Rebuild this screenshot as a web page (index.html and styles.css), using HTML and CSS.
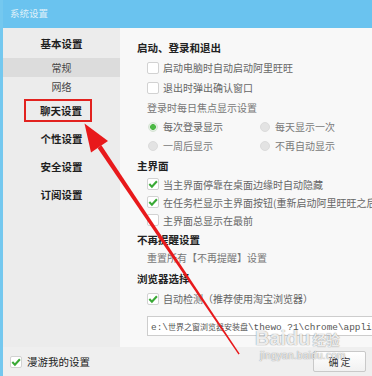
FILE: index.html
```html
<!DOCTYPE html>
<html lang="zh-CN">
<head>
	<meta charset="UTF-8">
	<title>系统设置</title>
	<link rel="stylesheet" href="styles.css">
</head>
<body>
<div class="window">
	<div class="titlebar">系统设置</div>

	<div class="main">
		<nav class="sidebar">
			<div class="nav-group">基本设置</div>
			<div class="nav-item active">常规</div>
			<div class="nav-item">网络</div>
			<div class="nav-group tall"><span class="mark">聊天设置</span></div>
			<div class="nav-group tall">个性设置</div>
			<div class="nav-group tall">安全设置</div>
			<div class="nav-group tall">订阅设置</div>
		</nav>

		<section class="content">
			<div class="sec">启动、登录和退出</div>
			<div class="opt gap1"><span class="cb"></span>启动电脑时自动启动阿里旺旺</div>
			<div class="opt gap1"><span class="cb"></span>退出时弹出确认窗口</div>
			<div class="hint gap1">登录时每日焦点显示设置</div>
			<div class="radio-row">
				<label class="radio-item"><span class="radio on"></span>每次登录显示</label>
				<label class="radio-item dim"><span class="radio"></span>每天显示一次</label>
			</div>
			<div class="radio-row">
				<label class="radio-item dim"><span class="radio"></span>一周后显示</label>
				<label class="radio-item dim"><span class="radio"></span>不再自动显示</label>
			</div>

			<div class="sec gap1">主界面</div>
			<div class="opt tight"><span class="cb on"><svg viewBox="0 0 12 12"><path d="M2.3 6.1 L4.9 8.7 L9.9 3.2"/></svg></span>当主界面停靠在桌面边缘时自动隐藏</div>
			<div class="opt tight"><span class="cb on"><svg viewBox="0 0 12 12"><path d="M2.3 6.1 L4.9 8.7 L9.9 3.2"/></svg></span>在任务栏显示主界面按钮(重新启动阿里旺旺之后生效)</div>
			<div class="opt tight"><span class="cb"></span>主界面总显示在最前</div>

			<div class="sec gap1">不再提醒设置</div>
			<div class="hint short">重置所有【不再提醒】设置</div>

			<div class="sec gap2">浏览器选择</div>
			<div class="opt gap1"><span class="cb on"><svg viewBox="0 0 12 12"><path d="M2.3 6.1 L4.9 8.7 L9.9 3.2"/></svg></span>自动检测（推荐使用淘宝浏览器）</div>
			<div class="path-box">e:\<span class="cjk">世界之窗浏览器安装盘</span>\thewo ?1\chrome\application\theworld.exe</div>
		</section>
	</div>

	<div class="footer">
		<label class="roam"><span class="cb on"><svg viewBox="0 0 12 12"><path d="M2.3 6.1 L4.9 8.7 L9.9 3.2"/></svg></span>漫游我的设置</label>
		<button class="btn" type="button">确 定</button>
	</div>

	<!-- watermark and red annotation arrow lie over the window -->
	<div class="watermark">
		<div class="wm-big">Baidu<span class="wm-cjk">经验</span></div>
		<div class="wm-small">jingyan.baidu.com</div>
	</div>
	<svg class="arrow" viewBox="0 0 372 376" width="372" height="376">
		<polygon points="101.4,145.3 97.6,147.9 238.5,354.6 239.7,353.8"/>
		<polygon points="84.5,123.5 108,141 91,152.5"/>
	</svg>
</div>
</body>
</html>
```

FILE: styles.css
```css
body{
	margin: 0;
	overflow: hidden;
	font-family: "Noto Sans CJK SC", "Liberation Sans", sans-serif;
}

.window{
	position: relative;
	width: 372px;
	height: 376px;
	overflow: hidden;
	border-left: 3px solid #74c8ef;
	box-sizing: border-box;
	background: #efefef;
}

.titlebar{
	height: 28px;
	line-height: 27px;
	padding-left: 7px;
	background: #6ac3ef;
	color: #dff0f9;
	font-size: 9.5px;
}

.main{
	display: flex;
	height: 319px;
}

/* left menu */
.sidebar{
	flex: none;
	width: 117px;
	background: #ececec;
	text-align: center;
}
.nav-group{
	display: flex;
	justify-content: center;
	align-items: center;
	height: 30px;
	font-size: 10.5px;
	font-weight: bold;
	color: #1e1e1e;
}
.nav-group.tall{
	height: 28px;
}
.nav-item{
	height: 19px;
	line-height: 19px;
	font-size: 10px;
	color: #444;
}
.nav-item.active{
	background: #dcdcdc;
}
.mark{
	display: inline-block;
	line-height: 19px;
	padding: 0 8px 0 14px;
	margin-right: 7px;
	border: 2px solid #e2221f;
}

/* right panel */
.content{
	flex: 1;
	min-width: 0;
	padding: 10px 0 0 17px;
	background: #f8f8f8;
	white-space: nowrap;
	overflow: hidden;
}
.sec{
	height: 19px;
	line-height: 19px;
	font-size: 10.5px;
	font-weight: bold;
	color: #222;
}
.opt{
	display: flex;
	align-items: center;
	gap: 4px;
	height: 19px;
	padding-left: 10px;
	font-size: 10px;
	color: #666;
}
.opt.tight{
	height: 18px;
}
.hint{
	height: 19px;
	line-height: 19px;
	padding-left: 10px;
	font-size: 10px;
	color: #777;
}
.hint.short{
	height: 18px;
	line-height: 17px;
}
.gap1{
	margin-top: 1px;
}
.gap2{
	margin-top: 2px;
}

.cb{
	flex: none;
	display: inline-flex;
	width: 12px;
	height: 12px;
	border: 1px solid #d2d2d2;
	border-radius: 2px;
	background: #fff;
	box-sizing: border-box;
}
.cb svg{
	width: 12px;
	height: 12px;
	margin: -1px;
}
.cb path{
	fill: none;
	stroke: #39a935;
	stroke-width: 2.1;
}

.radio-row{
	display: flex;
	height: 19px;
	padding-left: 11px;
}
.radio-item{
	display: flex;
	align-items: center;
	gap: 5px;
	width: 113px;
	font-size: 10px;
	color: #666;
}
.radio-item.dim{
	color: #7a7a7a;
}
.radio{
	width: 10px;
	height: 10px;
	border-radius: 50%;
	background: #e3e3e3;
	box-sizing: border-box;
	border: 1px solid #dcdcdc;
}
.radio.on{
	background: radial-gradient(circle, #4cb845 0 2.6px, #e4efe3 3.2px);
	border-color: #d6e4d5;
}

.path-box{
	height: 20px;
	line-height: 19px;
	margin: 8px 0 0 10px;
	padding-left: 3px;
	border: 1px solid #cdcdcd;
	border-right: none;
	background: #fff;
	box-sizing: border-box;
	font-family: "Liberation Mono", monospace;
	font-size: 9.4px;
	color: #555;
}
.path-box .cjk{
	font-family: "Noto Sans CJK SC", sans-serif;
	font-size: 8px;
}

/* bottom bar */
.footer{
	display: flex;
	align-items: center;
	justify-content: space-between;
	height: 29px;
	padding: 0 6px 0 7px;
	background: #efefef;
}
.roam{
	display: flex;
	align-items: center;
	gap: 5px;
	font-size: 10.5px;
	color: #222;
}
.btn{
	width: 53px;
	height: 21px;
	padding: 0;
	border: 1px solid #c9c9c9;
	border-radius: 2px;
	background: linear-gradient(#ffffff, #f1f1f1);
	font-family: "Noto Sans CJK SC", sans-serif;
	font-size: 10px;
	color: #333;
}

/* overlays */
.watermark{
	position: absolute;
	left: 252px;
	top: 327px;
	color: rgba(255,255,255,0.85);
	text-shadow: 0 0 1px rgba(90,90,90,0.6), 0 0 1px rgba(90,90,90,0.4);
	pointer-events: none;
}
.wm-big{
	font-family: "Liberation Sans", sans-serif;
	font-weight: bold;
	font-size: 20px;
	line-height: 22px;
}
.wm-cjk{
	font-family: "Noto Sans CJK SC", sans-serif;
	font-size: 13.5px;
	margin-left: 2px;
}
.wm-small{
	font-family: "Liberation Sans", sans-serif;
	font-size: 10px;
	line-height: 12px;
	margin-left: 5px;
	letter-spacing: 0.3px;
}
.arrow{
	position: absolute;
	left: -3px;
	top: 0;
	pointer-events: none;
}
.arrow polygon{
	fill: #e8191b;
}
```
